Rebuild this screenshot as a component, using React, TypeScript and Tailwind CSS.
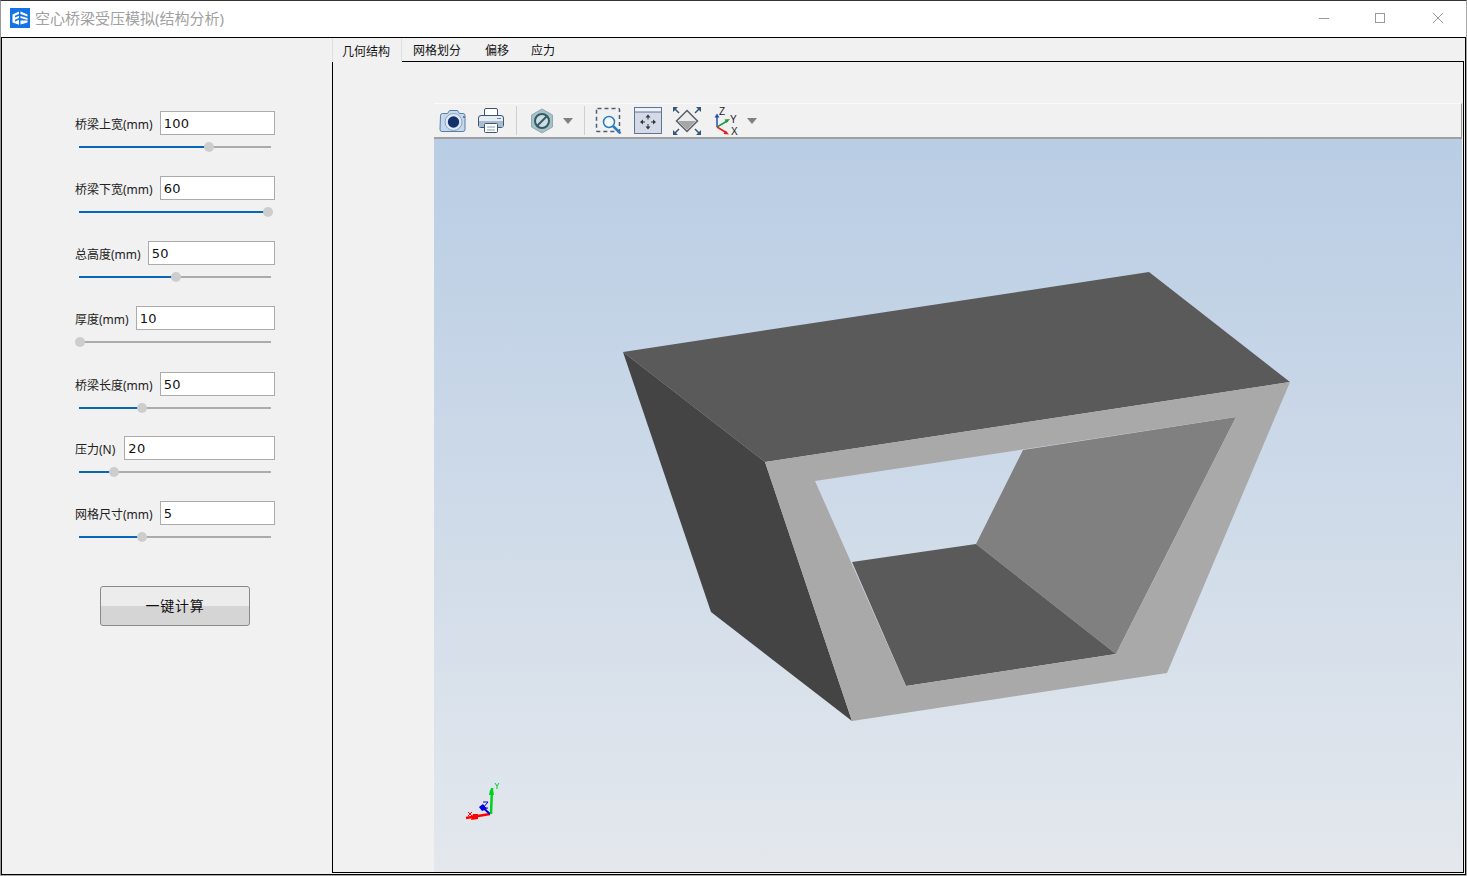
import React from "react";

const cjk = "font-['Noto_Sans','Noto_Sans_CJK_SC',sans-serif]";

const params = [
  { label: "桥梁上宽(mm)", value: "100", thumb: 130, gap: "mb-[18px]", labelGap: "mr-[7px]" },
  { label: "桥梁下宽(mm)", value: "60", thumb: 189, gap: "mb-[18px]", labelGap: "mr-[7px]" },
  { label: "总高度(mm)", value: "50", thumb: 97, gap: "mb-[18px]", labelGap: "mr-[7px]" },
  { label: "厚度(mm)", value: "10", thumb: 1, gap: "mb-[19px]", labelGap: "mr-[7px]" },
  { label: "桥梁长度(mm)", value: "50", thumb: 63, gap: "mb-[17px]", labelGap: "mr-[7px]" },
  { label: "压力(N)", value: "20", thumb: 35, gap: "mb-[18px]", labelGap: "mr-[9px]" },
  { label: "网格尺寸(mm)", value: "5", thumb: 63, gap: "mb-[38px]", labelGap: "mr-[7px]" },
];

function AppIcon() {
  return (
    <svg width="20" height="20" viewBox="0 0 20 20" className="shrink-0">
      <rect width="20" height="20" fill="#1473e6" />
      <path d="M2.500 6.500L9 3.500v2.500L5 7.800v1.700L9 7.700v2.300L5 11.800v1.700L9 11.700v5L2.500 14.500z" fill="#fff" />
      <path d="M10.500 3.500L17.500 6.500v2L10.500 6zM10.500 8L17.500 10v2L10.500 10zM10.500 12.500L17.500 12.500v2L10.500 16.500z" fill="#fff" />
    </svg>
  );
}

function WindowButtons() {
  return (
    <div className="flex items-center ml-auto h-full">
      <svg width="12" height="12" viewBox="0 0 12 12" className="mr-[44px]">
        <path d="M1 6.500h10" stroke="#999" />
      </svg>
      <svg width="12" height="12" viewBox="0 0 12 12" className="mr-[46px]">
        <rect x="1.500" y="1.500" width="9" height="9" fill="none" stroke="#999" />
      </svg>
      <svg width="12" height="12" viewBox="0 0 12 12" className="mr-[22px]">
        <path d="M1 1l10 10M11 1L1 11" stroke="#999" />
      </svg>
    </div>
  );
}

function ParamRow({ label, value, thumb, gap, labelGap }: { label: string; value: string; thumb: number; gap: string; labelGap: string }) {
  return (
    <div className={`w-[200px] ${gap}`}>
      <div className="flex items-center h-6">
        <span className={`text-[12px] text-[#222] whitespace-nowrap pt-[3px] ${labelGap}`}>{label}</span>
        <div className="flex-1 h-6 border border-[#ababab] bg-white pl-[3px] pt-[2px] flex items-center text-[13px] tracking-[0.3px] text-[#111] font-['DejaVu_Sans',sans-serif]">
          {value}
        </div>
      </div>
      <div className="relative h-[23px] ml-[4px] w-[192px] flex items-center">
        <div className="h-[2px] w-full bg-[#ababab]" />
        <div className="absolute left-0 h-[2px] bg-[#0a64b8]" style={{ width: thumb }} />
        <div className="absolute w-[10px] h-[10px] rounded-full bg-[#cdcdcd]" style={{ left: thumb - 5 }} />
      </div>
    </div>
  );
}

function Toolbar() {
  return (
    <div className="h-[36px] shrink-0 bg-[#f1f1f1] border-t border-t-[#fafafa] border-b-2 border-b-[#a0a0a0] border-r border-r-[#999] flex items-center pl-[5px]">
      <svg width="29" height="24" viewBox="0 0 29 24" className="mr-[9px]">
        <path d="M1.500 6.500a2 2 0 012-2h5l2-3h8l2 3h3.500a2 2 0 012 2v14a2 2 0 01-2 2h-21a2 2 0 01-2-2z" fill="#c5d8ee" stroke="#5a7ea6" />
        <circle cx="14.500" cy="13" r="8.500" fill="#dfe9f4" stroke="#8ba5bf" />
        <circle cx="14.500" cy="13" r="5.700" fill="#14316b" />
        <rect x="24" y="7" width="2" height="2" fill="#5a7ea6" />
      </svg>
      <svg width="28" height="27" viewBox="0 0 28 27" className="mr-[11px]">
        <path d="M7.500 9V3a1.500 1.500 0 011.500-1.500h10a1.500 1.500 0 011.500 1.500v6" fill="#fff" stroke="#3d5570" />
        <rect x="1.500" y="8.500" width="25" height="12" rx="2.500" fill="#e4ecf4" stroke="#3d5570" />
        <rect x="2" y="14" width="24" height="6" fill="#a9bccf" />
        <rect x="20" y="11" width="4" height="1" fill="#6d8299" />
        <rect x="7.500" y="16.500" width="13" height="9" rx="1" fill="#fff" stroke="#3d5570" />
        <path d="M10 20h8M10 23h8" stroke="#8a9aab" />
      </svg>
      <div className="w-px h-[29px] bg-[#cfcfcf] mr-[13px]" />
      <svg width="24" height="26" viewBox="0 0 24 26" className="mr-[9px]">
        <path d="M12 1l10.500 6v12L12 25 1.500 19V7z" fill="#a9c0c6" stroke="#8fabb1" />
        <circle cx="12" cy="13" r="7" fill="#cfdde3" stroke="#2d5c66" strokeWidth="2" />
        <path d="M7.500 17.500L16.500 8.500" stroke="#2d5c66" strokeWidth="2" />
      </svg>
      <svg width="10" height="6" viewBox="0 0 10 6" className="mr-[11px]">
        <path d="M0 0h10L5 6z" fill="#808080" />
      </svg>
      <div className="w-px h-[29px] bg-[#cfcfcf] mr-[10px]" />
      <svg width="27" height="27" viewBox="0 0 27 27" className="mr-[12px]">
        <rect x="1.500" y="1.500" width="23" height="23" rx="1" fill="none" stroke="#4a5f78" strokeWidth="1.500" strokeDasharray="4 3" />
        <circle cx="14" cy="15" r="5.500" fill="#f6f9fc" stroke="#2a7cbf" strokeWidth="1.500" />
        <path d="M18 19l7.500 7.500" stroke="#2a7cbf" strokeWidth="2.500" />
      </svg>
      <svg width="28" height="27" viewBox="0 0 28 27" className="mr-[11px]">
        <rect x="0.500" y="0.500" width="27" height="26" fill="#d5dbe6" stroke="#5d7696" />
        <rect x="1" y="1" width="26" height="4" fill="#eef2f7" />
        <path d="M1 5h26" stroke="#5d7696" />
        <path d="M14 9v3.500M14 17v3.500M7.500 15h3.500M17 15h3.500" stroke="#2a3644" />
        <path d="M14 7.500l-2.500 3h5zM14 22.500l-2.500-3h5zM6 15l3-2.500v5zM22 15l-3-2.500v5z" fill="#2a3644" />
      </svg>
      <svg width="28" height="28" viewBox="0 0 28 28" className="mr-[13px]">
        <path d="M14 3.500L24.500 14 14 24.500 3.500 14z" fill="#ececec" stroke="#5a6068" strokeWidth="1.500" />
        <path d="M5 14h18l-9 9z" fill="#a6a6a6" />
        <path d="M1.500 1.500l4.500 4.500M26.500 1.500l-4.500 4.500M1.500 26.500l4.500-4.500M26.500 26.500l-4.500-4.500" stroke="#345777" strokeWidth="1.500" />
        <path d="M0 0h5l-5 5zM28 0h-5l5 5zM0 28h5l-5-5zM28 28h-5l5-5z" fill="#345777" />
      </svg>
      <div className="relative w-[24px] h-[28px] mr-[9px]">
        <svg width="24" height="28" viewBox="0 0 24 28" className="absolute left-0 top-0">
          <path d="M3 20V9" stroke="#2050b0" strokeWidth="1.500" />
          <path d="M3 6.500l-2.500 4h5z" fill="#2050b0" />
          <path d="M3 20l11-6.500" stroke="#1f9a40" strokeWidth="1.500" />
          <path d="M16 12l-5.500 0.500 2 3.500z" fill="#1f9a40" />
          <path d="M3 20l10 6" stroke="#e02020" strokeWidth="1.500" />
          <path d="M15 27.500l-5.500-0.500 2-3.500z" fill="#e02020" />
        </svg>
        <span className="absolute left-[5px] top-[0px] text-[10px] leading-[10px] text-[#222] font-['Liberation_Sans',sans-serif]">Z</span>
        <span className="absolute left-[16px] top-[8px] text-[10px] leading-[10px] text-[#222] font-['Liberation_Sans',sans-serif]">Y</span>
        <span className="absolute left-[17px] top-[20px] text-[10px] leading-[10px] text-[#222] font-['Liberation_Sans',sans-serif]">X</span>
      </div>
      <svg width="10" height="6" viewBox="0 0 10 6">
        <path d="M0 0h10L5 6z" fill="#808080" />
      </svg>
    </div>
  );
}

function Viewport() {
  return (
    <div className="flex-1 min-h-0 bg-gradient-to-b from-[#b9cde4] to-[#e4e8ed]">
      <svg className="block w-full h-full" viewBox="434 139 1028 733">
        <path d="M623 352L1149 272L1290 382L765 462Z" fill="#5a5a5a" />
        <path d="M623 352L765 462L852 721L711 612Z" fill="#444444" />
        <path d="M1023 450L1236 417L1116 654L976 544Z" fill="#808080" />
        <path d="M852 562L976 544L1116 654L906 686Z" fill="#5a5a5a" />
        <path fillRule="evenodd" d="M765 462L1290 382L1167 673L852 721ZM815 481L1236 417L1116 654L906 686Z" fill="#a9a9a9" />
        {/* orientation axes */}
        <path d="M490 814L466 818" stroke="#ff0000" strokeWidth="2.500" />
        <path d="M473 814l-2 6 7-1 0-5z" fill="#ff0000" />
        <path d="M490 814L481 806" stroke="#0000e0" strokeWidth="2" />
        <path d="M479 807l4-3 4 5-5 2z" fill="#0000e0" />
        <path d="M491 814L492 788" stroke="#00d020" strokeWidth="2.500" />
        <path d="M489 795h5l-1-5h-3z" fill="#00d020" />
        <path d="M495 783l2 3 2-3M497 786v3" stroke="#00d020" fill="none" />
        <path d="M483 802h5l-5 6h5" stroke="#0000e0" fill="none" />
        <path d="M468 812l4 4m0-4l-4 4" stroke="#ff0000" fill="none" />
      </svg>
    </div>
  );
}

export default function App() {
  return (
    <div className={`w-[1467px] h-[876px] bg-[#f1f1f1] flex flex-col overflow-hidden border-t border-t-[#333] border-l border-l-[#999] border-r border-r-[#aaa] border-b border-b-[#aaa] ${cjk}`}>
      <div className="h-[36px] bg-white flex items-center pl-[9px] pb-[2px] shrink-0">
        <AppIcon />
        <span className="ml-[5px] text-[15px] text-[#a0a0a0] whitespace-nowrap">空心桥梁受压模拟(结构分析)</span>
        <WindowButtons />
      </div>
      <div className="flex-1 flex min-h-0 border border-black">
        <div className="w-[330px] pt-[73px] pl-[73px] flex flex-col shrink-0">
          {params.map((p) => (
            <ParamRow key={p.label} {...p} />
          ))}
          <button className="ml-[25px] w-[150px] h-[40px] pb-px rounded-[3px] border border-[#8a8a8a] bg-gradient-to-b from-[#ececec] from-50% to-[#d5d5d5] to-50% text-[14px] tracking-[0.8px] text-[#111]">
            一键计算
          </button>
        </div>
        <div className="flex-1 flex flex-col min-w-0 mr-px mb-px">
          <div className="flex h-[23px] shrink-0 text-[12px] text-[#111]">
            <div className="w-[70px] pl-[9px] pt-[3px] flex items-center bg-[#f1f1f1] border-x border-[#dedede] -mb-px z-10">几何结构</div>
            <div className="w-[72px] pl-[11px] pt-[3px] flex items-center">网格划分</div>
            <div className="w-[46px] pl-[11px] pt-[3px] flex items-center">偏移</div>
            <div className="w-[46px] pl-[11px] pt-[3px] flex items-center">应力</div>
          </div>
          <div className="flex-1 min-h-0 border border-black pl-[101px] pt-[41px] flex">
            <div className="flex-1 flex flex-col min-w-0 mr-px">
              <Toolbar />
              <Viewport />
            </div>
          </div>
        </div>
      </div>
    </div>
  );
}
